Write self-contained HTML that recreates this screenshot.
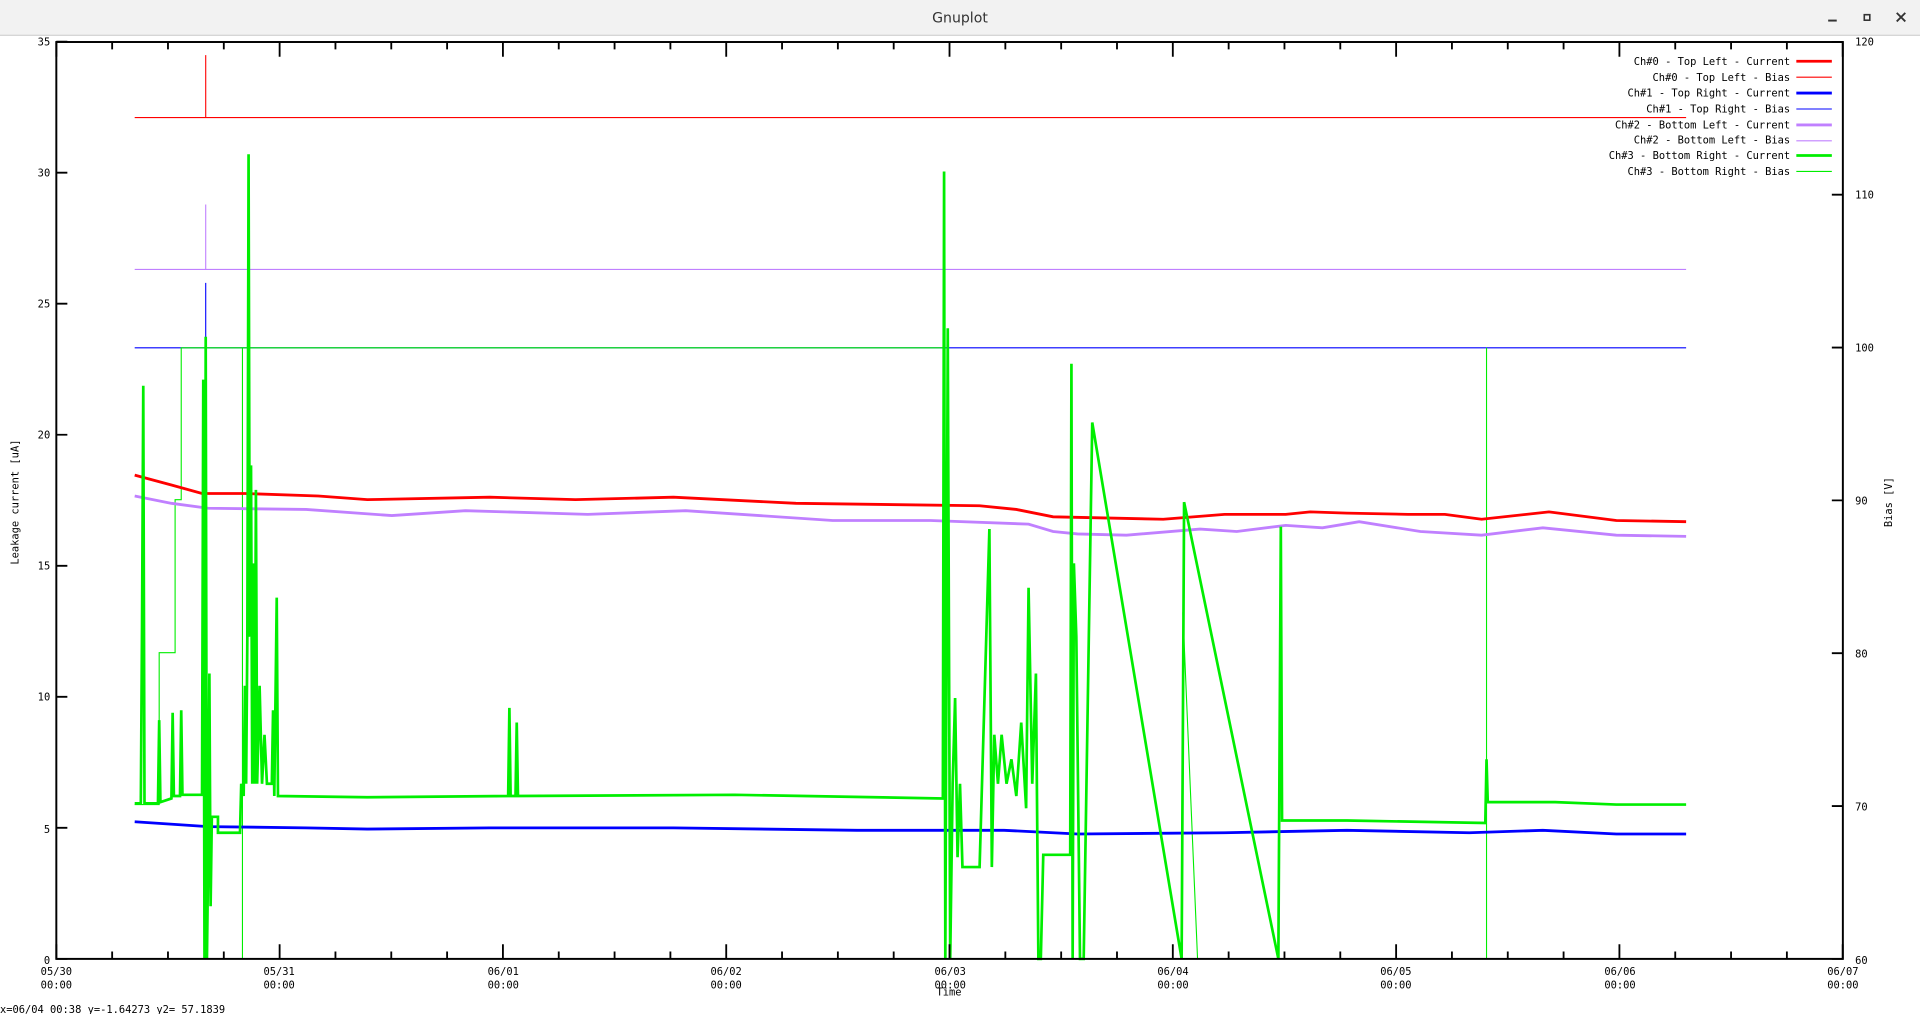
<!DOCTYPE html>
<html><head><meta charset="utf-8"><style>
html,body{margin:0;padding:0;background:#fff;overflow:hidden}
svg{display:block}
text{font-family:"DejaVu Sans Mono","Liberation Mono",monospace;fill:#000}
</style></head><body>
<svg id="s" width="1920" height="1014" viewBox="0 0 1568 828" preserveAspectRatio="none" xmlns="http://www.w3.org/2000/svg">
<rect x="0" y="0" width="1568" height="828" fill="#fff"/>
<rect x="0" y="0" width="1568" height="28.5" fill="#f2f2f2"/>
<line x1="0" y1="28.8" x2="1568" y2="28.8" stroke="#c8c8c8" stroke-width="0.8"/>
<text x="784" y="18.5" text-anchor="middle" style="font-family:'DejaVu Sans','Liberation Sans',sans-serif;font-size:11.5px;fill:#333">Gnuplot</text>
<rect x="1493" y="16" width="7" height="1.6" fill="#333"/>
<rect x="1522.5" y="12" width="4.5" height="4.5" fill="none" stroke="#333" stroke-width="1.3"/>
<path d="M1549 10.5 L1556 17.5 M1556 10.5 L1549 17.5" stroke="#333" stroke-width="1.5"/>

<!-- bias lines -->
<path d="M110 96 H1377 M168 96 V45" stroke="#ff0000" stroke-width="0.9" fill="none"/>
<path d="M110 220 H1377 M168 220 V167" stroke="#c080ff" stroke-width="0.9" fill="none"/>
<path d="M110 284 H1377 M168 284 V231" stroke="#0000ff" stroke-width="0.9" fill="none"/>
<path d="M110 657 H130 V533 H143 V408 H148 V284 H198 V783 M198 284 H771 M966 500 L978 783 M1214 783 V284" stroke="#00ee00" stroke-width="0.9" fill="none"/>

<!-- currents -->
<polyline fill="none" stroke="#ff0000" stroke-width="2.3" points="110,388 140,396 165,403 200,403 260,405 300,408 400,406 470,408 550,406 650,411 800,413 830,416 860,422 950,424 1000,420 1050,420 1070,418 1100,419 1150,420 1180,420 1210,424 1265,418 1320,425 1377,426"/>
<polyline fill="none" stroke="#c080ff" stroke-width="2.3" points="110,405 140,411 170,415 250,416 320,421 380,417 480,420 560,417 680,425 760,425 840,428 860,434 880,436 920,437 980,432 1010,434 1050,429 1080,431 1110,426 1160,434 1210,437 1260,431 1320,437 1377,438"/>
<polyline fill="none" stroke="#0000ff" stroke-width="2.3" points="110,671 170,675 250,676 300,677 400,676 550,676 700,678 820,678 880,681 1000,680 1100,678 1200,680 1260,678 1320,681 1377,681"/>
<polyline fill="none" stroke="#00ee00" stroke-width="2.2" points="110,656 115,656 116,510 117,315 118,656 129,656 130,588 131,655 140,652 141,582 142,650 147,650 148,580 149,649 165,649 166,310 167,783 168,275 169,783 170,700 171,550 172,740 173,667 178,667 178,680 196,680 197,640 199,650 200,560 201,640 202,520 203,126 204,520 205,380 206,640 207,460 208,640 209,400 210,640 212,560 214,640 216,600 218,640 222,640 223,580 224,650 226,488 227,650 300,651 415,650 416,578 417,650 421,650 422,590 423,650 600,649 770,652 771,140 772,783 774,268 776,783 778,640 780,570 782,700 784,640 786,708 800,708 808,432 810,708 812,600 815,640 818,600 822,640 826,620 830,650 834,590 838,660 840,480 843,640 846,550 848,783 850,783 852,698 874,698 875,297 876,783 877,460 879,520 882,783 885,783 892,345 965,783 967,410 1044,783 1046,430 1047,670 1100,670 1213,672 1214,620 1215,655 1270,655 1320,657 1377,657"/>

<!-- frame -->
<rect x="46" y="34.3" width="1459" height="748.7" fill="none" stroke="#000" stroke-width="1.6"/>
<g id="ticks" stroke="#000" stroke-width="1.5"></g>

<!-- left labels -->
<g font-size="8.5" text-anchor="end">
<text x="41" y="37">35</text><text x="41" y="144">30</text><text x="41" y="251">25</text>
<text x="41" y="358">20</text><text x="41" y="465">15</text><text x="41" y="572">10</text>
<text x="41" y="680">5</text><text x="41" y="787">0</text>
</g>
<g font-size="8.5" text-anchor="start">
<text x="1515" y="37">120</text><text x="1515" y="162">110</text><text x="1515" y="287">100</text>
<text x="1515" y="412">90</text><text x="1515" y="537">80</text><text x="1515" y="662">70</text>
<text x="1515" y="787">60</text>
</g>
<text font-size="8.5" transform="translate(15,410) rotate(-90)" text-anchor="middle">Leakage current [uA]</text>
<text font-size="8.5" transform="translate(1545,410) rotate(-90)" text-anchor="middle">Bias [V]</text>
<g font-size="8.5" text-anchor="middle">
<text x="46" y="796">05/30</text><text x="46" y="807">00:00</text>
<text x="228" y="796">05/31</text><text x="228" y="807">00:00</text>
<text x="411" y="796">06/01</text><text x="411" y="807">00:00</text>
<text x="593" y="796">06/02</text><text x="593" y="807">00:00</text>
<text x="776" y="796">06/03</text><text x="776" y="807">00:00</text>
<text x="958" y="796">06/04</text><text x="958" y="807">00:00</text>
<text x="1140" y="796">06/05</text><text x="1140" y="807">00:00</text>
<text x="1323" y="796">06/06</text><text x="1323" y="807">00:00</text>
<text x="1505" y="796">06/07</text><text x="1505" y="807">00:00</text>
<text x="775" y="813">Time</text>
</g>
<text font-size="8.5" x="0" y="827">x=06/04 00:38 y=-1.64273 y2= 57.1839</text>

<!-- legend -->
<g font-size="8.5" text-anchor="end">
<text x="1462" y="53">Ch#0 - Top Left - Current</text>
<text x="1462" y="66">Ch#0 - Top Left - Bias</text>
<text x="1462" y="79">Ch#1 - Top Right - Current</text>
<text x="1462" y="92">Ch#1 - Top Right - Bias</text>
<text x="1462" y="105">Ch#2 - Bottom Left - Current</text>
<text x="1462" y="117">Ch#2 - Bottom Left - Bias</text>
<text x="1462" y="130">Ch#3 - Bottom Right - Current</text>
<text x="1462" y="143">Ch#3 - Bottom Right - Bias</text>
</g>
<line x1="1467" y1="50" x2="1496" y2="50" stroke="#ff0000" stroke-width="2.3"/>
<line x1="1467" y1="63" x2="1496" y2="63" stroke="#ff0000" stroke-width="0.9"/>
<line x1="1467" y1="76" x2="1496" y2="76" stroke="#0000ff" stroke-width="2.3"/>
<line x1="1467" y1="89" x2="1496" y2="89" stroke="#0000ff" stroke-width="0.9"/>
<line x1="1467" y1="102" x2="1496" y2="102" stroke="#c080ff" stroke-width="2.3"/>
<line x1="1467" y1="115" x2="1496" y2="115" stroke="#c080ff" stroke-width="0.9"/>
<line x1="1467" y1="127" x2="1496" y2="127" stroke="#00ee00" stroke-width="2.3"/>
<line x1="1467" y1="140" x2="1496" y2="140" stroke="#00ee00" stroke-width="0.9"/>
</svg>
<script>
var g=document.getElementById('ticks'),d='';
for(var k=0;k<=32;k++){var x=46+k*45.59,L=(k%4==0)?12:6;d+='M'+x+' 783V'+(783-L)+'M'+x+' 34.3V'+(34.3+L);}
for(var i=0;i<=7;i++){var y=783-i*107;d+='M46 '+y+'H55';}
for(var j=0;j<=6;j++){var y2=783-j*124.8;d+='M1505 '+y2+'H1496';}
var p=document.createElementNS('http://www.w3.org/2000/svg','path');p.setAttribute('d',d);p.setAttribute('fill','none');g.appendChild(p);
</script>
</body></html>
